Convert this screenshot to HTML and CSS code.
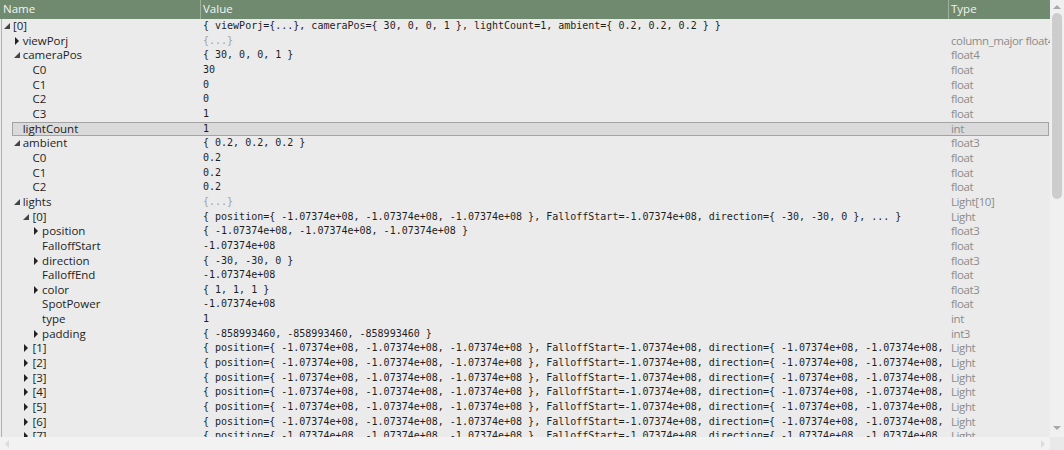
FILE: index.html
```html
<!DOCTYPE html>
<html lang="en">

<head>
    <meta charset="UTF-8">
    <title>Watch</title>
    <link rel="stylesheet" href="styles.css">
</head>

<body>
    <div class="panel">
        <!-- Tree view -->
        <div class="view">
            <div class="head">
                <div class="hcell">Name</div>
                <div class="hcell">Value</div>
                <div class="hcell">Type</div>
            </div>

            <div class="rows">
                <div class="row lv0 open"><div class="name"><i class="tw"></i>[0]</div><div class="val">{ viewPorj={...}, cameraPos={ 30, 0, 0, 1 }, lightCount=1, ambient={ 0.2, 0.2, 0.2 } }</div><div class="type"></div></div>
                <div class="row lv1 shut"><div class="name"><i class="tw"></i>viewPorj</div><div class="val dim">{...}</div><div class="type">column_major float4x4</div></div>
                <div class="row lv1 open"><div class="name"><i class="tw"></i>cameraPos</div><div class="val">{ 30, 0, 0, 1 }</div><div class="type">float4</div></div>
                <div class="row lv2"><div class="name"><i class="tw"></i>C0</div><div class="val">30</div><div class="type">float</div></div>
                <div class="row lv2"><div class="name"><i class="tw"></i>C1</div><div class="val">0</div><div class="type">float</div></div>
                <div class="row lv2"><div class="name"><i class="tw"></i>C2</div><div class="val">0</div><div class="type">float</div></div>
                <div class="row lv2"><div class="name"><i class="tw"></i>C3</div><div class="val">1</div><div class="type">float</div></div>
                <div class="row lv1 sel"><div class="name"><i class="tw"></i>lightCount</div><div class="val">1</div><div class="type">int</div></div>
                <div class="row lv1 open"><div class="name"><i class="tw"></i>ambient</div><div class="val">{ 0.2, 0.2, 0.2 }</div><div class="type">float3</div></div>
                <div class="row lv2"><div class="name"><i class="tw"></i>C0</div><div class="val">0.2</div><div class="type">float</div></div>
                <div class="row lv2"><div class="name"><i class="tw"></i>C1</div><div class="val">0.2</div><div class="type">float</div></div>
                <div class="row lv2"><div class="name"><i class="tw"></i>C2</div><div class="val">0.2</div><div class="type">float</div></div>
                <div class="row lv1 open"><div class="name"><i class="tw"></i>lights</div><div class="val dim">{...}</div><div class="type">Light[10]</div></div>
                <div class="row lv2 open"><div class="name"><i class="tw"></i>[0]</div><div class="val">{ position={ -1.07374e+08, -1.07374e+08, -1.07374e+08 }, FalloffStart=-1.07374e+08, direction={ -30, -30, 0 }, ... }</div><div class="type">Light</div></div>
                <div class="row lv3 shut"><div class="name"><i class="tw"></i>position</div><div class="val">{ -1.07374e+08, -1.07374e+08, -1.07374e+08 }</div><div class="type">float3</div></div>
                <div class="row lv3"><div class="name"><i class="tw"></i>FalloffStart</div><div class="val">-1.07374e+08</div><div class="type">float</div></div>
                <div class="row lv3 shut"><div class="name"><i class="tw"></i>direction</div><div class="val">{ -30, -30, 0 }</div><div class="type">float3</div></div>
                <div class="row lv3"><div class="name"><i class="tw"></i>FalloffEnd</div><div class="val">-1.07374e+08</div><div class="type">float</div></div>
                <div class="row lv3 shut"><div class="name"><i class="tw"></i>color</div><div class="val">{ 1, 1, 1 }</div><div class="type">float3</div></div>
                <div class="row lv3"><div class="name"><i class="tw"></i>SpotPower</div><div class="val">-1.07374e+08</div><div class="type">float</div></div>
                <div class="row lv3"><div class="name"><i class="tw"></i>type</div><div class="val">1</div><div class="type">int</div></div>
                <div class="row lv3 shut"><div class="name"><i class="tw"></i>padding</div><div class="val">{ -858993460, -858993460, -858993460 }</div><div class="type">int3</div></div>
                <div class="row lv2 shut"><div class="name"><i class="tw"></i>[1]</div><div class="val">{ position={ -1.07374e+08, -1.07374e+08, -1.07374e+08 }, FalloffStart=-1.07374e+08, direction={ -1.07374e+08, -1.07374e+08, -1.07374e+08 }, ... }</div><div class="type">Light</div></div>
                <div class="row lv2 shut"><div class="name"><i class="tw"></i>[2]</div><div class="val">{ position={ -1.07374e+08, -1.07374e+08, -1.07374e+08 }, FalloffStart=-1.07374e+08, direction={ -1.07374e+08, -1.07374e+08, -1.07374e+08 }, ... }</div><div class="type">Light</div></div>
                <div class="row lv2 shut"><div class="name"><i class="tw"></i>[3]</div><div class="val">{ position={ -1.07374e+08, -1.07374e+08, -1.07374e+08 }, FalloffStart=-1.07374e+08, direction={ -1.07374e+08, -1.07374e+08, -1.07374e+08 }, ... }</div><div class="type">Light</div></div>
                <div class="row lv2 shut"><div class="name"><i class="tw"></i>[4]</div><div class="val">{ position={ -1.07374e+08, -1.07374e+08, -1.07374e+08 }, FalloffStart=-1.07374e+08, direction={ -1.07374e+08, -1.07374e+08, -1.07374e+08 }, ... }</div><div class="type">Light</div></div>
                <div class="row lv2 shut"><div class="name"><i class="tw"></i>[5]</div><div class="val">{ position={ -1.07374e+08, -1.07374e+08, -1.07374e+08 }, FalloffStart=-1.07374e+08, direction={ -1.07374e+08, -1.07374e+08, -1.07374e+08 }, ... }</div><div class="type">Light</div></div>
                <div class="row lv2 shut"><div class="name"><i class="tw"></i>[6]</div><div class="val">{ position={ -1.07374e+08, -1.07374e+08, -1.07374e+08 }, FalloffStart=-1.07374e+08, direction={ -1.07374e+08, -1.07374e+08, -1.07374e+08 }, ... }</div><div class="type">Light</div></div>
                <div class="row lv2 shut"><div class="name"><i class="tw"></i>[7]</div><div class="val">{ position={ -1.07374e+08, -1.07374e+08, -1.07374e+08 }, FalloffStart=-1.07374e+08, direction={ -1.07374e+08, -1.07374e+08, -1.07374e+08 }, ... }</div><div class="type">Light</div></div>
            </div>
        </div>

        <!-- Vertical scrollbar -->
        <div class="vscroll">
            <span class="arr up"></span>
            <div class="vtrack"><div class="vthumb"></div></div>
            <span class="arr down"></span>
        </div>

        <!-- Horizontal scrollbar -->
        <div class="hscroll">
            <span class="arr left"></span>
            <span class="arr right"></span>
        </div>
        <div class="corner"></div>
    </div>
</body>

</html>
```

FILE: styles.css
```css
:root {
    --head-bg: #6f8a6f;
    --head-line: #9db09c;
    --body-bg: #ebebeb;
    --text: #1e1e1e;
    --muted: #8c8c8c;
    --dim: #a2a2a2;
    --row-h: 14.667px;
}

body {
    margin: 0;
    background: var(--body-bg);
    font-family: 'Open Sans', 'Noto Sans', sans-serif;
    overflow: hidden;
}

.panel {
    display: grid;
    grid-template-columns: 1050px 14px;
    grid-template-rows: 437px 13px;
    width: 1064px;
    height: 450px;
}

/* Tree view */
.view {
    overflow: hidden;
    display: flex;
    flex-direction: column;
}

.head {
    display: grid;
    grid-template-columns: 200px 748px 102px;
    height: 19px;
    flex: none;
    background: var(--head-bg);
    color: #f3f5f2;
    font-size: 11.5px;
    line-height: 18px;
}

.hcell {
    padding-left: 3px;
    overflow: hidden;
    white-space: nowrap;
}

.hcell + .hcell {
    border-left: 1px solid var(--head-line);
    padding-left: 2px;
}

.rows {
    flex: 1;
    margin-left: 1px;
    border-left: 1px solid #b1b1b1;
    overflow: hidden;
}

.row {
    position: relative;
    display: grid;
    grid-template-columns: 198px 748px 102px;
    height: var(--row-h);
    line-height: var(--row-h);
    white-space: nowrap;
}

.row > div {
    position: relative;
    z-index: 1;
    overflow: hidden;
    text-overflow: clip;
}

.row.sel::before {
    content: "";
    position: absolute;
    left: 10px;
    right: 1px;
    top: 0;
    bottom: 0;
    background: #dadada;
    border: 1px solid #a3a3a3;
    box-sizing: border-box;
}

.name {
    font-size: 11.5px;
    color: var(--text);
}

.lv0 .name { padding-left: 1px; }
.lv1 .name { padding-left: 10.7px; }
.lv2 .name { padding-left: 20.4px; }
.lv3 .name { padding-left: 30.1px; }

.tw {
    display: inline-block;
    width: 10px;
    height: 8px;
    position: relative;
}

.open .tw::before {
    content: "";
    position: absolute;
    left: 1px;
    top: 1px;
    border-bottom: 6px solid #444;
    border-left: 6px solid transparent;
}

.shut .tw::before {
    content: "";
    position: absolute;
    left: 2px;
    top: 0;
    border-left: 4px solid #222;
    border-top: 4px solid transparent;
    border-bottom: 4px solid transparent;
}

.val {
    padding-left: 3px;
    font-family: 'DejaVu Sans Mono', 'Liberation Mono', monospace;
    font-size: 10px;
    color: var(--text);
}

.val.dim {
    color: var(--dim);
}

.type {
    padding-left: 3px;
    font-size: 11.5px;
    letter-spacing: -0.4px;
    color: var(--muted);
}

/* Scrollbars */
.vscroll {
    background: #f0f0f0;
    display: flex;
    flex-direction: column;
    align-items: center;
    padding: 5px 0 7px;
    box-sizing: border-box;
}

.vtrack {
    flex: 1;
    width: 100%;
    padding-top: 4px;
}

.vthumb {
    width: 10px;
    height: 186px;
    margin: 0 auto;
    background: #cdcdcd;
    border-radius: 5px;
}

.arr {
    width: 0;
    height: 0;
    flex: none;
}

.arr.up {
    border-left: 4px solid transparent;
    border-right: 4px solid transparent;
    border-bottom: 4px solid #a8a8a8;
}

.arr.down {
    border-left: 4px solid transparent;
    border-right: 4px solid transparent;
    border-top: 4px solid #a8a8a8;
}

.hscroll {
    background: #f2f2f2;
    display: flex;
    align-items: center;
    justify-content: space-between;
    padding: 0 5px;
    border-radius: 0 0 4px 0;
}

.arr.left {
    border-top: 4px solid transparent;
    border-bottom: 4px solid transparent;
    border-right: 4px solid #dcdcdc;
}

.arr.right {
    border-top: 4px solid transparent;
    border-bottom: 4px solid transparent;
    border-left: 4px solid #dcdcdc;
}

.corner {
    background: #e9e9e9;
}
```
